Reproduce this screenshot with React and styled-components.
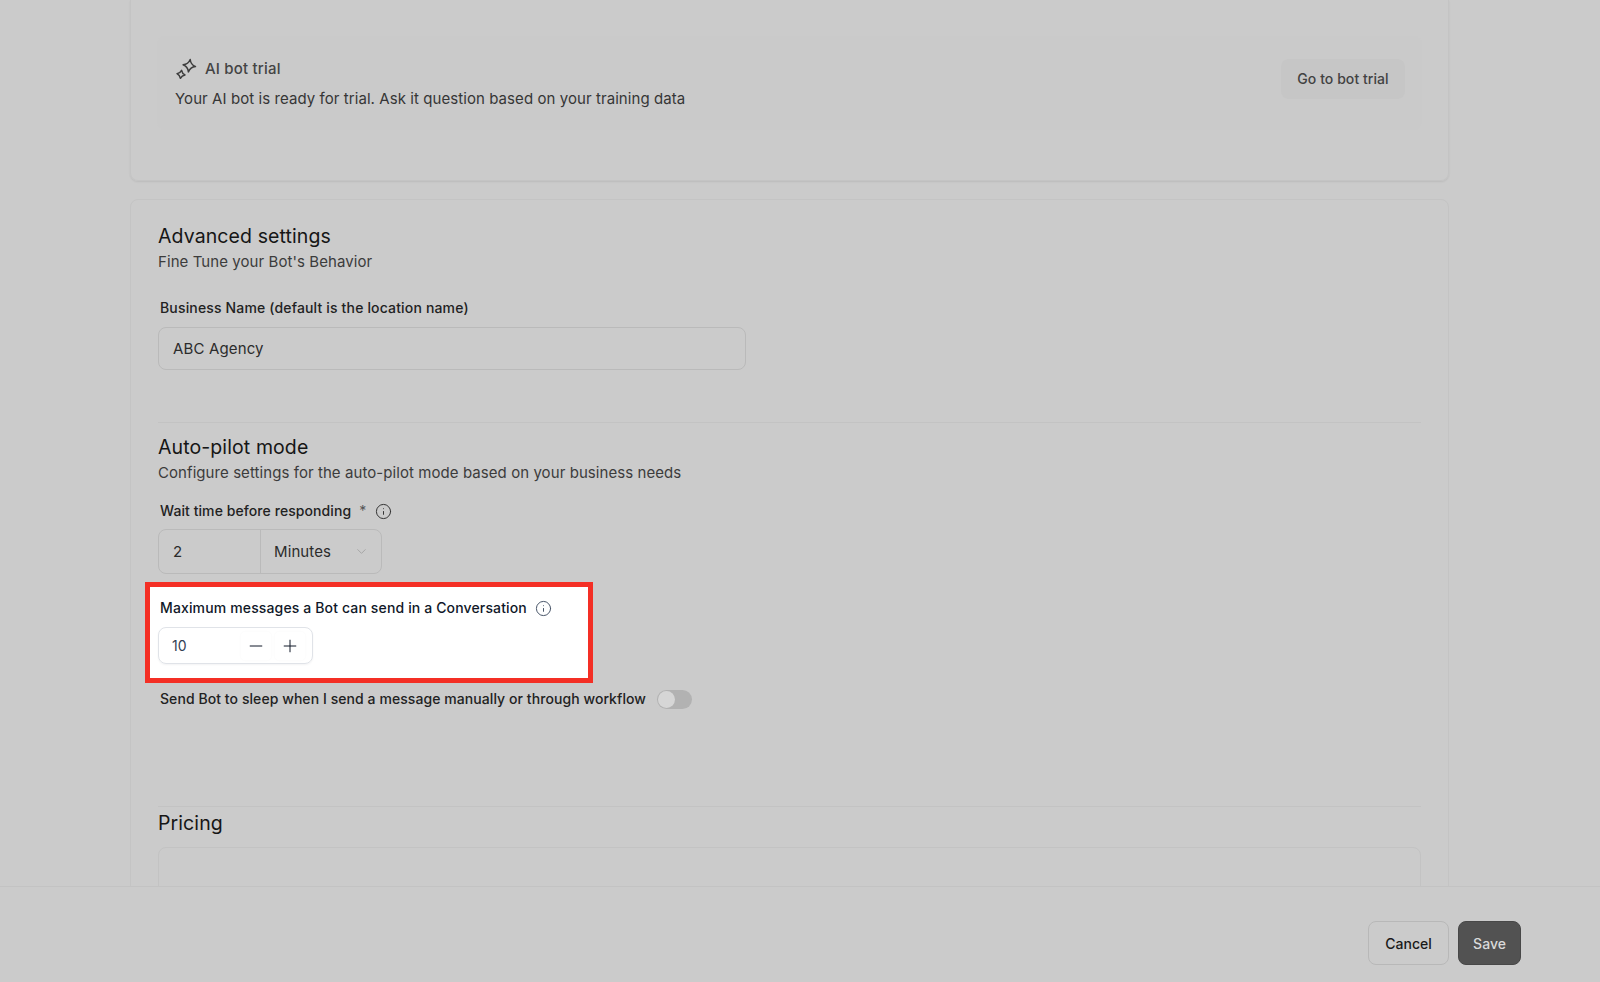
import styled, { createGlobalStyle } from 'styled-components';
import { ChevronDown, Info, Minus, Plus } from 'lucide-react';

const GlobalStyle = createGlobalStyle`
    html, body {
        margin: 0;
        padding: 0;
        background: #cbcbcb;
        font-family: Inter, "Liberation Sans", sans-serif;
    }
    * {
        box-sizing: border-box;
    }
`;

function SparkleIcon() {
    return (
        <svg width="22" height="22" viewBox="0 0 22 22" fill="none" stroke="#3d3d3d" strokeWidth="1.5" strokeLinejoin="round">
            <path d="M15.2 1.5 Q15.72 6.64 20.5 8.6 Q15.36 9.12 13.4 13.9 Q12.88 8.76 8.1 6.8 Q13.24 6.28 15.2 1.5 Z" />
            <path d="M6.6 12.3 Q7.15 15.45 10 16.9 Q6.85 17.45 5.4 20.3 Q4.85 17.15 2 15.7 Q5.15 15.15 6.6 12.3 Z" />
        </svg>
    );
}

function App() {
    return (
        <Page>
            <GlobalStyle />
            <Main>
                <TrialCard>
                    <TrialBox>
                        <div>
                            <TrialTitle>
                                <SparkleIcon />
                                AI bot trial
                            </TrialTitle>
                            <TrialText>Your AI bot is ready for trial. Ask it question based on your training data</TrialText>
                        </div>
                        <TrialButton>Go to bot trial</TrialButton>
                    </TrialBox>
                </TrialCard>
                <SettingsCard>
                    <Heading>Advanced settings</Heading>
                    <Sub>Fine Tune your Bot's Behavior</Sub>
                    <Label $top={26} $track={0.16}>Business Name (default is the location name)</Label>
                    <TextInput>ABC Agency</TextInput>
                    <Divider $top={52} />
                    <Heading $top={12}>Auto-pilot mode</Heading>
                    <Sub>Configure settings for the auto-pilot mode based on your business needs</Sub>
                    <Label $top={18} $track={0.08}>
                        Wait time before responding
                        <Star>*</Star>
                        <Info size={17} strokeWidth={1.4} color="#333" />
                    </Label>
                    <WaitGroup>
                        <WaitValue>2</WaitValue>
                        <WaitUnit>
                            Minutes
                            <ChevronDown size={15} strokeWidth={1.2} color="#9a9a9a" />
                        </WaitUnit>
                    </WaitGroup>
                    <Highlight>
                        <HighlightLabel>
                            Maximum messages a Bot can send in a Conversation
                            <Info size={17} strokeWidth={1.4} color="#475467" />
                        </HighlightLabel>
                        <Stepper>
                            <StepperValue>10</StepperValue>
                            <StepButton>
                                <Minus size={20} strokeWidth={1.2} />
                            </StepButton>
                            <StepButton>
                                <Plus size={20} strokeWidth={1.2} />
                            </StepButton>
                        </Stepper>
                    </Highlight>
                    <SleepRow>
                        Send Bot to sleep when I send a message manually or through workflow
                        <Toggle />
                    </SleepRow>
                    <Divider $top={97} />
                    <Heading $top={4}>Pricing</Heading>
                    <PricingBox />
                </SettingsCard>
            </Main>
            <Footer>
                <CancelButton>Cancel</CancelButton>
                <SaveButton>Save</SaveButton>
            </Footer>
        </Page>
    );
}

const Page = styled.div`
    height: 982px;
    display: flex;
    flex-direction: column;
    overflow: hidden;
    background: #cbcbcb;
`;

const Main = styled.div`
    flex: 1;
    min-height: 0;
    overflow: hidden;
    padding: 0 151px 0 130px;
`;

const TrialCard = styled.section`
    height: 181px;
    padding: 36px 26px 0;
    border: 1px solid #c4c4c4;
    border-top: none;
    border-radius: 0 0 8px 8px;
    box-shadow: 0 1px 2px rgba(0, 0, 0, 0.08);
`;

const TrialBox = styled.div`
    height: 94px;
    padding: 1px 17px 0 18px;
    display: flex;
    align-items: center;
    justify-content: space-between;
    background: #cacaca;
    border-radius: 8px;
`;

const TrialTitle = styled.div`
    display: flex;
    align-items: center;
    gap: 8px;
    font-size: 15px;
    font-weight: 500;
    line-height: 20px;
    letter-spacing: 0.2px;
    color: #444;
`;

const TrialText = styled.p`
    margin: 9px 0 0;
    font-size: 15px;
    line-height: 20px;
    letter-spacing: 0.07px;
    color: #363636;
`;

const TrialButton = styled.button`
    width: 124px;
    height: 40px;
    margin-top: -10px;
    border: none;
    border-radius: 8px;
    background: #c6c6c6;
    font: 500 14px Inter, sans-serif;
    letter-spacing: 0.06px;
    color: #424242;
`;

const SettingsCard = styled.section`
    margin-top: 18px;
    height: 720px;
    padding: 24px 27px 0;
    border: 1px solid #c4c4c4;
    border-radius: 8px;
`;

const Heading = styled.h2`
    margin: ${(p) => p.$top || 0}px 0 0;
    font-size: 19.5px;
    font-weight: 400;
    line-height: 24px;
    letter-spacing: 0.1px;
    color: #161616;
`;

const Sub = styled.p`
    margin: 4px 0 0;
    font-size: 15px;
    line-height: 20px;
    letter-spacing: 0.07px;
    color: #3c3c3c;
`;

const Label = styled.div`
    margin: ${(p) => p.$top || 0}px 0 0 2px;
    display: flex;
    align-items: center;
    font-size: 14px;
    font-weight: 500;
    line-height: 20px;
    letter-spacing: ${(p) => p.$track}px;
    color: #222;
`;

const Star = styled.span`
    margin: 0 9px 0 8px;
    font-weight: 400;
    color: #555;
`;

const TextInput = styled.div`
    margin-top: 9px;
    width: 588px;
    height: 43px;
    padding: 0 14px;
    display: flex;
    align-items: center;
    border: 1px solid #bababa;
    border-radius: 8px;
    font-size: 15px;
    letter-spacing: 0.15px;
    color: #2c2c2c;
`;

const Divider = styled.hr`
    margin: ${(p) => p.$top}px 0 0;
    border: none;
    border-top: 1px solid #c3c3c3;
`;

const WaitGroup = styled.div`
    margin-top: 8px;
    width: 224px;
    height: 45px;
    display: flex;
    border: 1px solid #bababa;
    border-radius: 8px;
    font-size: 15px;
    letter-spacing: 0.1px;
    color: #2c2c2c;
`;

const WaitValue = styled.div`
    width: 102px;
    padding-left: 14px;
    display: flex;
    align-items: center;
    border-right: 1px solid #bababa;
`;

const WaitUnit = styled.div`
    flex: 1;
    padding: 0 12px 0 13px;
    display: flex;
    align-items: center;
    justify-content: space-between;
`;

const Highlight = styled.div`
    margin: 8px 0 0 -13px;
    width: 448px;
    height: 101px;
    padding: 11px 0 0 8px;
    background: #fff;
    border: 5px solid #f42f25;
`;

const HighlightLabel = styled.div`
    margin-left: 2px;
    display: flex;
    align-items: center;
    gap: 8px;
    font-size: 14px;
    font-weight: 500;
    line-height: 20px;
    letter-spacing: 0.14px;
    color: #101828;
`;

const Stepper = styled.div`
    margin-top: 9px;
    width: 155px;
    height: 37px;
    padding: 0 7px 0 13px;
    display: flex;
    align-items: center;
    border: 1px solid #e0e3e8;
    border-radius: 8px;
    box-shadow: 0 1px 2px rgba(16, 24, 40, 0.05);
`;

const StepperValue = styled.span`
    flex: 1;
    font-size: 14px;
    color: #344054;
`;

const StepButton = styled.span`
    width: 30px;
    height: 28px;
    margin-left: 4px;
    display: flex;
    align-items: center;
    justify-content: center;
    border-radius: 4px;
    color: #101828;
    box-shadow: 0 0 3px rgba(16, 24, 40, 0.03);
`;

const SleepRow = styled.div`
    margin: 6px 0 0 2px;
    display: flex;
    align-items: center;
    gap: 11px;
    font-size: 14px;
    font-weight: 500;
    line-height: 20px;
    letter-spacing: 0.07px;
    color: #222;
`;

const Toggle = styled.span`
    position: relative;
    width: 35px;
    height: 19px;
    border-radius: 10px;
    background: #b2b2b2;
    &::after {
        content: '';
        position: absolute;
        left: 1px;
        top: 1px;
        width: 17px;
        height: 17px;
        border-radius: 50%;
        background: #d6d6d6;
    }
`;

const PricingBox = styled.div`
    margin-top: 12px;
    height: 120px;
    border: 1px solid #c3c3c3;
    border-radius: 8px;
`;

const Footer = styled.footer`
    height: 96px;
    flex-shrink: 0;
    padding: 34px 79px 0 0;
    display: flex;
    justify-content: flex-end;
    gap: 9px;
    background: #cbcbcb;
    border-top: 1px solid #c3c3c3;
`;

const CancelButton = styled.button`
    width: 81px;
    height: 44px;
    border: 1px solid #b8b8b8;
    border-radius: 8px;
    background: #cbcbcb;
    font: 500 14px Inter, sans-serif;
    color: #1a1a1a;
`;

const SaveButton = styled.button`
    width: 63px;
    height: 44px;
    border: 1px solid #484848;
    border-radius: 8px;
    background: #525252;
    font: 500 14px Inter, sans-serif;
    color: #dadada;
`;

export default App;
